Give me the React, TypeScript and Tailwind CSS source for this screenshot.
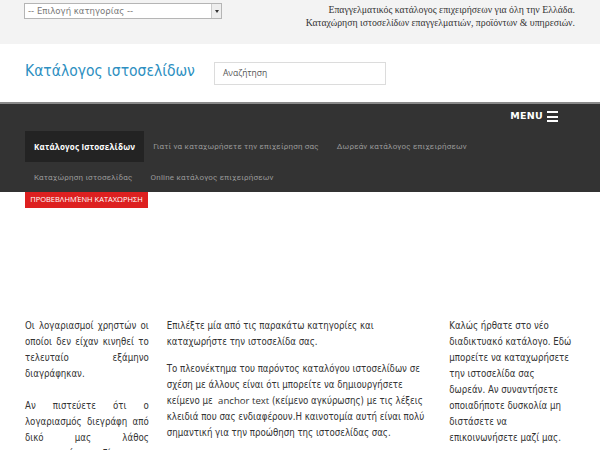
import React from "react";

const navRow1 = [
  "Κατάλογος Ιστοσελίδων",
  "Γιατί να καταχωρήσετε την επιχείρηση σας",
  "Δωρεάν κατάλογος επιχειρήσεων",
];
const navRow2 = ["Καταχώρηση ιστοσελίδας", "Online κατάλογος επιχειρήσεων"];

const App: React.FC = () => {
  return (
    <div className="w-[600px] h-[450px] overflow-hidden bg-white font-['DejaVu_Sans_Condensed','DejaVu_Sans',sans-serif] font-stretch-condensed">
      {/* Top bar */}
      <div className="h-[44px] bg-[#f3f3f3] flex justify-between pl-[24px] pr-[25px]">
        <div className="mt-[3px] w-[198px] h-[16px] bg-white border border-[#b5b5b5] flex items-center justify-between">
          <span className="pl-[3px] text-[9.5px] text-[#777] leading-none">
            -- Επιλογή κατηγορίας --
          </span>
          <span className="w-[10px] h-[14px] border-l border-[#ccc] bg-[#eee] flex items-center justify-center">
            <span className="w-0 h-0 border-l-[2.5px] border-r-[2.5px] border-t-[3px] border-l-transparent border-r-transparent border-t-[#333]" />
          </span>
        </div>
        <div className="mt-[3px] text-right text-[9.8px] leading-[13px] text-[#333] font-['Liberation_Serif',serif] font-stretch-normal">
          <div>Επαγγελματικός κατάλογος επιχειρήσεων για όλη την Ελλάδα.</div>
          <div>Καταχώρηση ιστοσελίδων επαγγελματιών, προϊόντων &amp; υπηρεσιών.</div>
        </div>
      </div>

      {/* Header */}
      <div className="h-[58px] flex items-center px-[25px]">
        <h1 className="text-[15.5px] text-[#2d8fc1] w-[189px] -mt-[2px]">Κατάλογος ιστοσελίδων</h1>
        <div className="w-[172px] h-[23px] border border-[#dcdcdc] flex items-center pl-[8px] text-[8.5px] text-[#555] font-['Open_Sans',sans-serif] font-stretch-normal">
          Αναζήτηση
        </div>
      </div>

      {/* Nav */}
      <div className="h-[90px] bg-[#333] border-t-2 border-[#8a8a8a] px-[25px] font-['Roboto',sans-serif] font-stretch-normal">
        <div className="h-[25px] flex items-center justify-end pr-[17px]">
          <span className="text-white text-[9.5px] font-bold tracking-[0.3px] font-['DejaVu_Sans',sans-serif]">MENU</span>
          <span className="ml-[4px] flex flex-col gap-[2.5px]">
            <span className="w-[11px] h-[2px] bg-white" />
            <span className="w-[11px] h-[2px] bg-white" />
            <span className="w-[11px] h-[2px] bg-white" />
          </span>
        </div>
        <div className="flex h-[31px] mt-[2px]">
          {navRow1.map((n, i) => (
            <div
              key={n}
              className={
                i === 0
                  ? "px-[9px] flex items-center bg-[#232323] text-white font-bold text-[8px] tracking-[0.2px] font-['Open_Sans',sans-serif]"
                  : "px-[9px] flex items-center text-[#9a9a9a] text-[8px] tracking-[0.2px]"
              }
            >
              {n}
            </div>
          ))}
        </div>
        <div className="flex h-[32px]">
          {navRow2.map((n) => (
            <div key={n} className="px-[9px] flex items-center text-[#9a9a9a] text-[8px] tracking-[0.2px]">
              {n}
            </div>
          ))}
        </div>
      </div>

      <div className="px-[25px]">
        <div className="w-[123px] h-[16px] bg-[#dd2020] text-white text-[7.5px] flex items-center justify-center font-['Open_Sans',sans-serif] font-stretch-normal">
          ΠΡΟΒΕΒΛΗΜΈΝΗ ΚΑΤΑΧΩΡΗΣΗ
        </div>
      </div>

      {/* Content */}
      <div className="mt-[110px] px-[25px] flex text-[9.6px] leading-[16px] text-[#333]">
        <div className="w-[124px] text-justify">
          <p>Οι λογαριασμοί χρηστών οι οποίοι δεν είχαν κινηθεί το τελευταίο εξάμηνο διαγράφηκαν.</p>
          <p className="mt-[16px]">
            Αν πιστεύετε ότι ο λογαριασμός διεγράφη από δικό μας λάθος επικοινωνήστε μαζί μας.
          </p>
        </div>
        <div className="ml-[18px] w-[266px]">
          <p>Επιλέξτε μία από τις παρακάτω κατηγορίες και καταχωρήστε την ιστοσελίδα σας.</p>
          <p className="mt-[11px]">
            Το πλεονέκτημα του παρόντος καταλόγου ιστοσελίδων σε σχέση με άλλους είναι ότι μπορείτε να
            δημιουργήσετε κείμενο με&nbsp; <span className="font-['Open_Sans',sans-serif] font-stretch-normal leading-[16px]">anchor text</span>{" "}
            (κείμενο αγκύρωσης) με τις λέξεις κλειδιά που σας ενδιαφέρουν.Η καινοτομία αυτή είναι πολύ
            σημαντική για την προώθηση της ιστοσελίδας σας.
          </p>
        </div>
        <div className="ml-[17px] w-[126px]">
          <p>
            Καλώς ήρθατε στο νέο διαδικτυακό κατάλογο. Εδώ μπορείτε να καταχωρήσετε την ιστοσελίδα σας
            <br />
            δωρεάν. Αν συναντήσετε οποιαδήποτε δυσκολία μη διστάσετε να επικοινωνήσετε μαζί μας.
          </p>
        </div>
      </div>
    </div>
  );
};

export default App;
